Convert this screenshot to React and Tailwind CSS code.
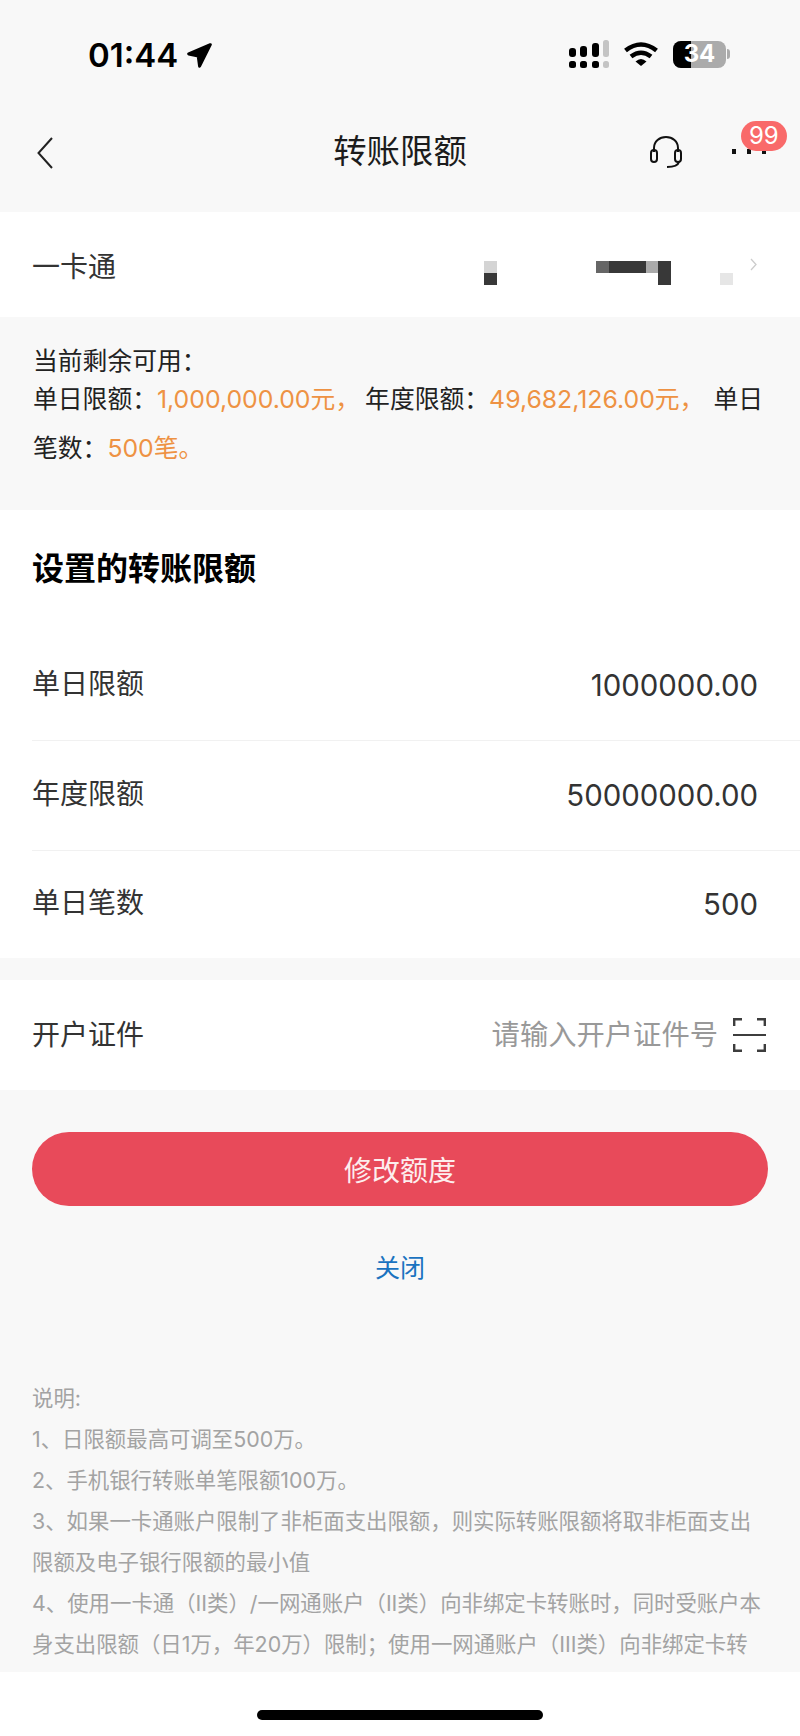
const font = { fontFamily: '"Inter", "Noto Sans CJK SC", sans-serif' };

function Signal() {
  return (
    <svg width="40" height="28" viewBox="0 0 40 28" className="mr-[15px]">
      <g fill="#000">
        <rect x="0" y="8" width="7" height="9" rx="3" />
        <rect x="11" y="6" width="7" height="11" rx="3" />
        <rect x="23" y="3" width="7" height="14" rx="3" />
        <rect x="0" y="21" width="7" height="7" rx="2.5" />
        <rect x="11" y="21" width="7" height="7" rx="2.5" />
        <rect x="23" y="21" width="7" height="7" rx="2.5" />
      </g>
      <g fill="#c4c4c4">
        <rect x="34" y="0" width="6" height="17" rx="2.5" />
        <rect x="34" y="21" width="6" height="7" rx="2.5" />
      </g>
    </svg>
  );
}

function Wifi() {
  return (
    <svg width="34" height="24" viewBox="0 0 34 24" className="mr-[15px]" fill="none">
      <path d="M1.5 8.5Q17 -3.5 32.5 8.5" stroke="#000" strokeWidth="4.6" />
      <path d="M7 14.5Q17 7 27 14.5" stroke="#000" strokeWidth="4.6" />
      <path d="M11.5 19.5Q17 14.5 22.5 19.5L17 24Z" fill="#000" />
    </svg>
  );
}

function Battery() {
  return (
    <div className="flex items-center">
      <div className="relative h-[27px] w-[53px] overflow-hidden rounded-[8px] bg-[#ababab]">
        <div className="h-full w-[18px] bg-black" />
        <div className="absolute inset-0 flex items-center justify-center text-[24px] font-bold leading-none text-white">34</div>
      </div>
      <div className="ml-px h-[10px] w-[3px] rounded-r-full bg-[#ababab]" />
    </div>
  );
}

function StatusBar() {
  return (
    <div className="flex h-[90px] items-start pl-[88px] pr-[70px] pt-[40px]">
      <div className="flex items-center pt-px">
        <span className="text-[33px] font-semibold leading-[28px] text-black">01:44</span>
        <svg width="25" height="25" viewBox="0 0 25 25" className="ml-[9px]">
          <path d="M23.3 1.7 1.7 11 11.2 13 12.6 23.2Z" fill="#000" stroke="#000" strokeWidth="3" strokeLinejoin="round" />
        </svg>
      </div>
      <div className="ml-auto flex items-center">
        <Signal />
        <Wifi />
        <Battery />
      </div>
    </div>
  );
}

function NavBar() {
  return (
    <div className="grid h-[122px] grid-cols-[1fr_auto_1fr] items-start pt-[43px]">
      <div className="pl-[37px] pt-[4px]">
        <svg width="16" height="32" viewBox="0 0 16 32" fill="none">
          <path d="M15 1 1.5 16 15 31" stroke="#222" strokeWidth="2" />
        </svg>
      </div>
      <div className="text-[33.4px] leading-[36px] text-[#1c1c1c]">转账限额</div>
      <div className="relative">
        <svg width="34" height="34" viewBox="0 0 34 34" fill="none" className="absolute left-[182px] top-[2px]" stroke="#111" strokeWidth="2">
          <path d="M5 17v-4C5 6.5 10.5 2 17 2s12 4.5 12 11v4" />
          <rect x="2" y="15" width="6" height="12" rx="3" />
          <rect x="26" y="15" width="6" height="12" rx="3" />
          <path d="M30 27c-1 3.5-5 5-12 5" />
        </svg>
        <div className="absolute left-[265px] top-[16px] flex gap-[11px]">
          <div className="h-[5px] w-[4px] bg-[#111]" />
          <div className="h-[5px] w-[4px] bg-[#111]" />
          <div className="h-[5px] w-[4px] bg-[#111]" />
        </div>
        <div className="absolute left-[274px] top-[-12px] flex h-[30px] w-[46px] items-center justify-center rounded-full bg-[#f96a6a] text-[24px] leading-none text-white">99</div>
      </div>
    </div>
  );
}

function CardRow() {
  return (
    <div className="flex h-[105px] items-center bg-white pl-[32px] pt-[7px]">
      <div className="mb-[2px] text-[28px] leading-[36px] text-[#333]">一卡通</div>
      {/* mosaic over the card number */}
      <svg width="249" height="24" viewBox="0 0 249 24" className="ml-[368px] mt-[10px]">
        <rect x="0" y="0" width="13" height="12" fill="#d4d4d4" />
        <rect x="0" y="12" width="13" height="12" fill="#383838" />
        <rect x="112" y="0" width="13" height="12" fill="#666" />
        <rect x="125" y="0" width="37" height="12" fill="#383838" />
        <rect x="162" y="0" width="12" height="12" fill="#aaa" />
        <rect x="174" y="0" width="13" height="24" fill="#383838" />
        <rect x="236" y="12" width="13" height="12" fill="#e6e6e6" />
      </svg>
      <svg width="7" height="13" viewBox="0 0 7 13" fill="none" className="mb-[7px] ml-[17px]">
        <path d="M1 1 6 6.5 1 12" stroke="#ccc" strokeWidth="1.3" />
      </svg>
    </div>
  );
}

function InfoBlock() {
  return (
    <div className="h-[193px] pl-[33px] pt-[25px] text-[24.8px] text-[#222]">
      <div className="leading-[38px]">当前剩余可用：</div>
      <div className="whitespace-nowrap leading-[38px]">
        单日限额：<span className="pr-[5px] text-[#ee9243]">1,000,000.00元，</span>年度限额：<span className="pr-[9px] text-[#ee9243]">49,682,126.00元，</span>单日
      </div>
      <div className="mt-[11px] leading-[38px]">
        笔数：<span className="text-[#ee9243]">500笔。</span>
      </div>
    </div>
  );
}

function LimitRow({ label, value, last }) {
  return (
    <div className={`ml-[32px] flex items-center justify-between pr-[42px] ${last ? "h-[107px]" : "h-[110px] border-b border-[#f1f1f1]"}`}>
      <span className="pb-[4px] text-[28px] leading-[36px] text-[#333]">{label}</span>
      <span className="text-[29.4px] leading-[36px] text-[#333]">{value}</span>
    </div>
  );
}

function Notes() {
  const lines = [
    "说明:",
    "1、日限额最高可调至500万。",
    "2、手机银行转账单笔限额100万。",
    "3、如果一卡通账户限制了非柜面支出限额，则实际转账限额将取非柜面支出",
    "限额及电子银行限额的最小值",
    "4、使用一卡通（II类）/一网通账户（II类）向非绑定卡转账时，同时受账户本",
    "身支出限额（日1万，年20万）限制；使用一网通账户（III类）向非绑定卡转",
  ];
  return (
    <div className="mt-[92px] pl-[32px] text-[21.4px] leading-[41px] text-[#a3a3a3]">
      {lines.map((line) => (
        <div key={line} className="whitespace-nowrap">{line}</div>
      ))}
    </div>
  );
}

export default function App() {
  return (
    <div style={font} className="flex h-[1736px] w-[800px] flex-col overflow-hidden bg-white">
      <div className="h-[1672px] overflow-hidden bg-[#f8f8f8]">
        <StatusBar />
        <NavBar />
        <CardRow />
        <InfoBlock />

        <div className="h-[448px] bg-white">
          <div className="flex h-[121px] items-start pl-[32px] pt-[41px]">
            <h2 className="text-[32px] font-bold leading-[36px] text-black">设置的转账限额</h2>
          </div>
          <LimitRow label="单日限额" value="1000000.00" />
          <LimitRow label="年度限额" value="50000000.00" />
          <LimitRow label="单日笔数" value="500" last />
        </div>

        <div className="mt-[22px] flex h-[110px] items-center justify-between bg-white pl-[32px] pr-[34px]">
          <span className="text-[28px] leading-[36px] text-[#333]">开户证件</span>
          <div className="flex items-center">
            <span className="text-[28.3px] leading-[36px] text-[#999]">请输入开户证件号</span>
            <svg width="33" height="34" viewBox="0 0 33 34" fill="none" className="ml-[15px]" stroke="#3d3d3d" strokeWidth="2.4">
              <path d="M1.2 8V1.2H9M24 1.2h7.8V8M1.2 26v6.8H9M24 32.8h7.8V26" />
              <path d="M0 17h33" strokeWidth="2" />
            </svg>
          </div>
        </div>

        <div className="mx-[32px] mt-[42px] flex h-[74px] items-center justify-center rounded-full bg-[#e84a5a] pt-[4px] text-[28px] text-[#fdeeee]">修改额度</div>
        <div className="mt-[44px] text-center text-[25px] leading-[36px] text-[#1a73c0]">关闭</div>

        <Notes />
      </div>
      <div className="flex flex-1 justify-center pt-[38px]">
        <div className="h-[10px] w-[286px] rounded-full bg-black" />
      </div>
    </div>
  );
}
